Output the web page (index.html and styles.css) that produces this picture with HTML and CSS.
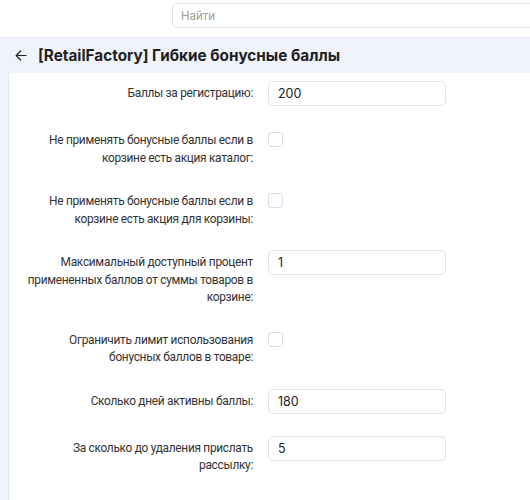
FILE: index.html
```html
<!DOCTYPE html>
<html lang="ru">
<head>
  <meta charset="UTF-8">
  <meta name="viewport" content="width=device-width, initial-scale=1.0">
  <title>Гибкие бонусные баллы</title>
  <link rel="stylesheet" href="styles.css">
</head>
<body>
  <div class="topbar">
    <input class="search" type="text" placeholder="Найти">
  </div>

  <div class="page-head">
    <span class="back">
      <svg width="12" height="11" viewBox="0 0 12 11" fill="none" stroke="#222" stroke-width="1.2" stroke-linecap="round" stroke-linejoin="round">
        <path d="M11 5.5H1.2M5.6 1L1.2 5.5L5.6 10"/>
      </svg>
    </span>
    <h1>[RetailFactory] Гибкие бонусные баллы</h1>
  </div>

  <div class="panel">
    <form class="settings">
      <div class="row">
        <label>Баллы за регистрацию:</label>
        <input class="field" type="text" value="200">
      </div>
      <div class="row">
        <label>Не применять бонусные баллы если в корзине есть акция каталог:</label>
        <span class="check"></span>
      </div>
      <div class="row">
        <label>Не применять бонусные баллы если в корзине есть акция для корзины:</label>
        <span class="check"></span>
      </div>
      <div class="row">
        <label>Максимальный доступный процент примененных баллов от суммы товаров в корзине:</label>
        <input class="field" type="text" value="1">
      </div>
      <div class="row">
        <label>Ограничить лимит использования бонусных баллов в товаре:</label>
        <span class="check"></span>
      </div>
      <div class="row">
        <label>Сколько дней активны баллы:</label>
        <input class="field" type="text" value="180">
      </div>
      <div class="row">
        <label>За сколько до удаления прислать рассылку:</label>
        <input class="field" type="text" value="5">
      </div>
    </form>
  </div>
</body>
</html>
```

FILE: styles.css
```css
body { margin: 0; font-family: Roboto, "Noto Sans", sans-serif; background: #f0f3fa; color: #2b2b2b; height: 500px; overflow: hidden; }
.topbar { height: 38px; background: #fff; border-bottom: 1px solid #e3e8f1; padding-left: 172px; padding-top: 3px; box-sizing: border-box; overflow: hidden; white-space: nowrap; }
.search { width: 358px; height: 25px; box-sizing: border-box; border: 1px solid #dce3ef; border-right: 0; border-radius: 5px 0 0 5px; padding: 0 8px; font-family: Inter, sans-serif; font-size: 11.5px; outline: none; }
.search::placeholder { color: #9a9a9a; }
.page-head { display: flex; align-items: center; height: 35px; padding-left: 15px; }
.back { display: flex; width: 23px; }
.page-head h1 { margin: 0; font-family: Inter, sans-serif; font-size: 15.3px; font-weight: 700; color: #1f1f1f; }
.panel { margin-left: 8px; background: #fff; border-left: 1px solid #e1e6f0; height: 427px; padding: 8px 0 0 8px; box-sizing: border-box; }
.settings { display: flex; flex-direction: column; gap: 22px; }
.settings .row:nth-child(4) { margin-bottom: -1px; }
.row { display: grid; grid-template-columns: 236px 178px; column-gap: 15px; align-items: start; }
.row label { text-align: right; font-size: 11.9px; line-height: 17.5px; letter-spacing: -0.3px; padding-top: 4px; color: #333; }
.field { height: 25px; box-sizing: border-box; border: 1px solid #dde4f0; border-radius: 5px; padding: 0 9px; font-family: Inter, sans-serif; font-size: 12.5px; color: #222; outline: none; }
.check { width: 15px; height: 15px; box-sizing: border-box; border: 1px solid #d6deec; border-radius: 3px; margin-top: 4px; }
```
